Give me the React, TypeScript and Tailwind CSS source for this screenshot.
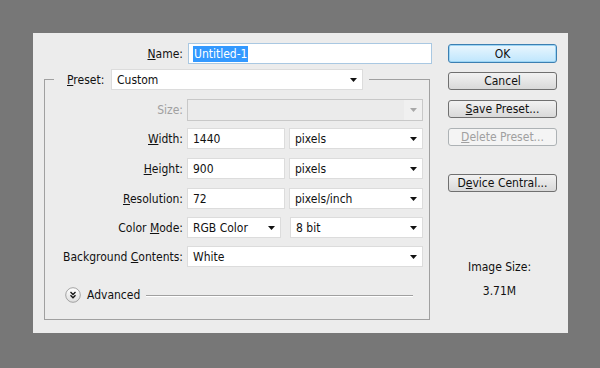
import React from "react";

const font = { fontFamily: '"DejaVu Sans Condensed", "DejaVu Sans", Tahoma, sans-serif' };

function Arrow({ disabled = false }: { disabled?: boolean }) {
  return (
    <svg width="7" height="4" viewBox="0 0 7 4" className="shrink-0">
      <polygon points="0,0 7,0 3.5,4" fill={disabled ? "#a8a8a8" : "#111"} />
    </svg>
  );
}

function Select({ value, w, disabled = false }: { value: string; w: string; disabled?: boolean }) {
  return (
    <div
      className={`${w} h-[21px] flex items-center justify-between border ${
        disabled ? "border-[#c8c8c8] bg-[#ebebeb]" : "border-[#dcdcdc] bg-white"
      } pl-[5px] pr-[5px]`}
    >
      <span className="leading-none">{value}</span>
      <Arrow disabled={disabled} />
    </div>
  );
}

function Input({ value, w }: { value: string; w: string }) {
  return (
    <div className={`${w} h-[21px] flex items-center border border-[#dcdcdc] bg-white pl-[5px]`}>
      <span className="leading-none">{value}</span>
    </div>
  );
}

function Label({ children, disabled = false }: { children: React.ReactNode; disabled?: boolean }) {
  return (
    <div className={`w-[142px] shrink-0 text-right pr-[4px] whitespace-nowrap ${disabled ? "text-[#a0a0a0]" : ""}`}>
      {children}
    </div>
  );
}

function Btn({
  children,
  kind = "normal",
  cls = "",
}: {
  children: React.ReactNode;
  kind?: "ok" | "normal" | "disabled";
  cls?: string;
}) {
  const base = "h-[18px] w-[109px] rounded-[3px] flex items-center justify-center leading-none";
  const style =
    kind === "ok"
      ? "border border-[#3c7fb1] bg-gradient-to-b from-[#eaf6fd] to-[#bee6fd] shadow-[inset_0_0_0_1px_#9cd5f5]"
      : kind === "disabled"
      ? "border border-[#adb2b5] bg-[#f4f4f4] text-[#a0a0a0]"
      : "border border-[#707070] bg-gradient-to-b from-[#f2f2f2] to-[#d9d9d9]";
  return <div className={`${base} ${style} ${cls}`}>{children}</div>;
}

export default function App() {
  return (
    <div className="w-[600px] h-[368px] bg-[#777777] pt-[33px] pl-[33px] text-[12px] text-[#111]" style={font}>
      <div className="w-[535px] h-[300px] bg-[#ececec] flex pl-[11px]">
        {/* left column */}
        <div className="w-[388px] flex flex-col">
          <div className="flex items-center mt-[10px]">
            <div className="w-[144px] text-right pr-[5px]">
              <u>N</u>ame:
            </div>
            <div className="w-[244px] h-[21px] flex items-center border border-[#a9c8e2] bg-white pl-[4px]">
              <span className="bg-[#3399ff] text-white px-[1px] leading-[16px]">Untitled-1</span>
            </div>
          </div>

          <fieldset className="mt-[5px] w-[386px] border border-[#a0a0a0] px-0 pb-[15px]">
            <legend className="ml-[9px] pl-[13px] pr-[6px]">
              <div className="flex items-center">
                <span className="w-[44px] whitespace-nowrap">
                  <u>P</u>reset:
                </span>
                <Select value="Custom" w="w-[252px]" />
              </div>
            </legend>

            <div className="flex items-center mt-[9px]">
              <Label disabled>Size:</Label>
              <div className="w-[236px] h-[22px] flex items-center justify-end border border-[#c8c8c8] bg-[#ebebeb]">
                <div className="w-[18px] h-[20px] bg-[#f0f0f0] flex items-center justify-center">
                  <Arrow disabled />
                </div>
              </div>
            </div>

            <div className="flex items-center mt-[7px]">
              <Label>
                <u>W</u>idth:
              </Label>
              <Input value="1440" w="w-[98px]" />
              <div className="ml-[4px]">
                <Select value="pixels" w="w-[134px]" />
              </div>
            </div>

            <div className="flex items-center mt-[9px]">
              <Label>
                <u>H</u>eight:
              </Label>
              <Input value="900" w="w-[98px]" />
              <div className="ml-[4px]">
                <Select value="pixels" w="w-[134px]" />
              </div>
            </div>

            <div className="flex items-center mt-[9px]">
              <Label>
                <u>R</u>esolution:
              </Label>
              <Input value="72" w="w-[98px]" />
              <div className="ml-[4px]">
                <Select value="pixels/inch" w="w-[134px]" />
              </div>
            </div>

            <div className="flex items-center mt-[8px]">
              <Label>
                Color <u>M</u>ode:
              </Label>
              <Select value="RGB Color" w="w-[94px]" />
              <div className="ml-[9px]">
                <Select value="8 bit" w="w-[133px]" />
              </div>
            </div>

            <div className="flex items-center mt-[8px]">
              <Label>
                Background <u>C</u>ontents:
              </Label>
              <Select value="White" w="w-[236px]" />
            </div>

            <div className="flex items-center mt-[19px] pl-[20px] pr-[16px]">
              <svg width="16" height="16" viewBox="0 0 16 16" className="shrink-0">
                <defs>
                  <linearGradient id="g" x1="0" y1="0" x2="0" y2="1">
                    <stop offset="0" stopColor="#ffffff" />
                    <stop offset="1" stopColor="#dedede" />
                  </linearGradient>
                </defs>
                <circle cx="8" cy="8" r="7.3" fill="url(#g)" stroke="#9a9a9a" strokeWidth="0.9" />
                <polyline points="5.5,5 8,7.5 10.5,5" fill="none" stroke="#111" strokeWidth="1.3" />
                <polyline points="5.5,8.3 8,10.8 10.5,8.3" fill="none" stroke="#111" strokeWidth="1.3" />
              </svg>
              <span className="ml-[6px]">Advanced</span>
              <div className="ml-[6px] flex-1 h-px bg-[#a0a0a0] shadow-[0_1px_0_#ffffff]" />
            </div>
          </fieldset>
        </div>

        {/* right column */}
        <div className="ml-[16px] w-[109px] flex flex-col">
          <Btn kind="ok" cls="mt-[11px] h-[19px]">
            OK
          </Btn>
          <Btn cls="mt-[9px]">Cancel</Btn>
          <Btn cls="mt-[10px]">
            <span>
              <u>S</u>ave Preset...
            </span>
          </Btn>
          <Btn kind="disabled" cls="mt-[10px]">
            <span>
              <u>D</u>elete Preset...
            </span>
          </Btn>
          <Btn cls="mt-[28px]">
            <span>
              D<u>e</u>vice Central...
            </span>
          </Btn>
          <div className="mt-[68px] leading-[14px] text-center pr-[6px]">Image Size:</div>
          <div className="mt-[10px] leading-[14px] text-center pr-[6px]">3.71M</div>
        </div>
      </div>
    </div>
  );
}
